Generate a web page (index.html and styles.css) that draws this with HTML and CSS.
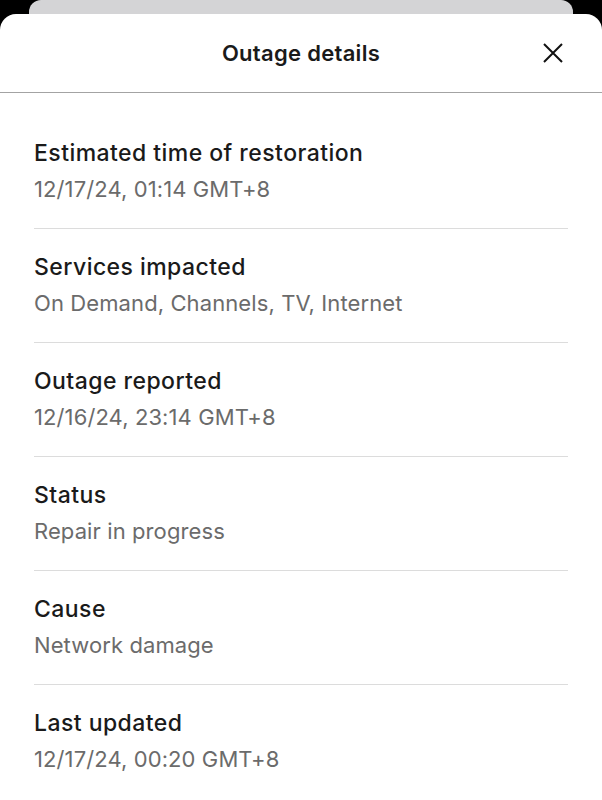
FILE: index.html
```html
<!DOCTYPE html>
<html lang="en">
<head>
    <meta charset="UTF-8">
    <meta name="viewport" content="width=device-width, initial-scale=1.0">
    <title>Outage details</title>
    <link rel="stylesheet" href="styles.css">
</head>
<body>
    <div class="backdrop"></div>
    <div class="sheet">
        <div class="sheet-header">
            <h1 class="title">Outage details</h1>
            <button class="close-btn" aria-label="Close">
                <svg width="22" height="22" viewBox="0 0 22 22">
                    <path d="M2 2 L20 20 M20 2 L2 20" stroke="#111" stroke-width="2" fill="none"/>
                </svg>
            </button>
        </div>
        <div class="details">
            <div class="row">
                <div class="label">Estimated time of restoration</div>
                <div class="value">12/17/24, 01:14 GMT+8</div>
            </div>
            <div class="row">
                <div class="label">Services impacted</div>
                <div class="value">On Demand, Channels, TV, Internet</div>
            </div>
            <div class="row">
                <div class="label">Outage reported</div>
                <div class="value">12/16/24, 23:14 GMT+8</div>
            </div>
            <div class="row">
                <div class="label">Status</div>
                <div class="value">Repair in progress</div>
            </div>
            <div class="row">
                <div class="label">Cause</div>
                <div class="value">Network damage</div>
            </div>
            <div class="row last">
                <div class="label">Last updated</div>
                <div class="value">12/17/24, 00:20 GMT+8</div>
            </div>
        </div>
    </div>
</body>
</html>
```

FILE: styles.css
```css
body{
    margin:0;
    background:#000;
    font-family: Inter, "Noto Sans", sans-serif;
    height:800px;
    overflow:hidden;
}
.backdrop{
    height:14px;
    margin:0 29px;
    background:#d4d4d6;
    border-radius:12px 12px 0 0;
}
.sheet{
    background:#fff;
    border-radius:16px 16px 0 0;
    height:786px;
}
.sheet-header{
    position:relative;
    height:78px;
    display:flex;
    align-items:center;
    justify-content:center;
    border-bottom:1px solid #a3a3a3;
}
.title{
    margin:0;
    font-size:22px;
    font-weight:600;
    letter-spacing:0.3px;
    color:#1a1a1a;
}
.close-btn{
    position:absolute;
    right:38px;
    top:28px;
    padding:0;
    border:none;
    background:none;
    display:flex;
}
.details{
    padding:22px 34px 0 34px;
}
.row{
    padding:24px 0 25px 0;
    border-bottom:1px solid #dcdcdc;
    display:flex;
    flex-direction:column;
    gap:8px;
}
.row.last{
    border-bottom:none;
}
.label{
    font-size:23px;
    line-height:28px;
    font-weight:500;
    letter-spacing:0.45px;
    color:#1a1a1a;
}
.value{
    font-size:22px;
    line-height:28px;
    letter-spacing:0.1px;
    color:#6b6b6b;
}
```
